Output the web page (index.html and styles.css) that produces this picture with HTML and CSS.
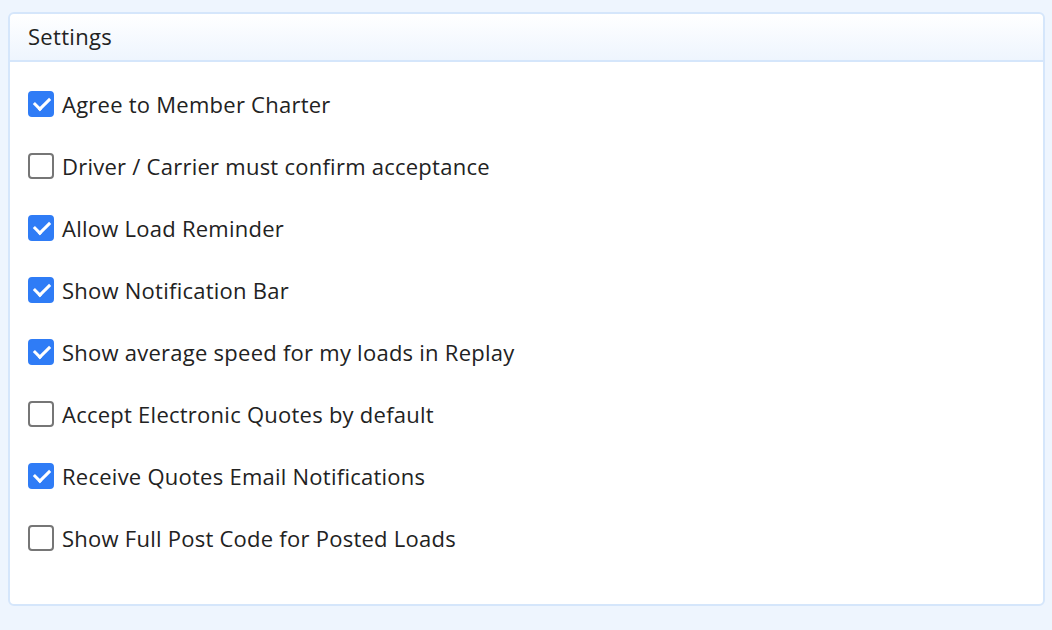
FILE: index.html
```html
<!DOCTYPE html>
<html lang="en">
<head>
    <meta charset="UTF-8">
    <meta name="viewport" content="width=device-width, initial-scale=1.0">
    <title>Settings</title>
    <link rel="stylesheet" href="styles.css">
</head>
<body>
    <div class="panel">
        <div class="panel-heading">Settings</div>
        <div class="panel-body">
            <label class="option"><input type="checkbox" checked><span class="box"></span>Agree to Member Charter</label>
            <label class="option"><input type="checkbox"><span class="box"></span>Driver / Carrier must confirm acceptance</label>
            <label class="option"><input type="checkbox" checked><span class="box"></span>Allow Load Reminder</label>
            <label class="option"><input type="checkbox" checked><span class="box"></span>Show Notification Bar</label>
            <label class="option"><input type="checkbox" checked><span class="box"></span>Show average speed for my loads in Replay</label>
            <label class="option"><input type="checkbox"><span class="box"></span>Accept Electronic Quotes by default</label>
            <label class="option"><input type="checkbox" checked><span class="box"></span>Receive Quotes Email Notifications</label>
            <label class="option"><input type="checkbox"><span class="box"></span>Show Full Post Code for Posted Loads</label>
        </div>
    </div>
</body>
</html>
```

FILE: styles.css
```css
body {
    font-family: 'Open Sans', 'Noto Sans', sans-serif;
    margin: 0;
    padding: 12px 7px 24px 8px;
    background-color: #eef5fe;
    color: #222;
    letter-spacing: 0.3px;
}

.panel {
    background-color: white;
    border: 2px solid #d5e6fb;
    border-radius: 6px;
}

.panel-heading {
    height: 46px;
    line-height: 45px;
    padding-left: 18px;
    font-size: 22px;
    border-bottom: 2px solid #d5e6fb;
    border-radius: 6px 6px 0 0;
    background: linear-gradient(#ffffff, #eef5fe);
}

.panel-body {
    padding: 11px 18px 35px;
}

.option {
    display: flex;
    align-items: center;
    height: 62px;
    font-size: 22px;
    letter-spacing: 0.25px;
    cursor: pointer;
}

.option input {
    display: none;
}

.box {
    width: 22px;
    height: 22px;
    border: 2px solid #767676;
    border-radius: 4px;
    margin-right: 8px;
    position: relative;
    flex-shrink: 0;
}

.option input:checked + .box {
    background-color: #2f7cf6;
    border-color: #2f7cf6;
}

.option input:checked + .box::after {
    content: '';
    position: absolute;
    left: 7px;
    top: 1px;
    width: 7px;
    height: 13px;
    border: solid white;
    border-width: 0 3.5px 3.5px 0;
    transform: rotate(45deg);
}
```
